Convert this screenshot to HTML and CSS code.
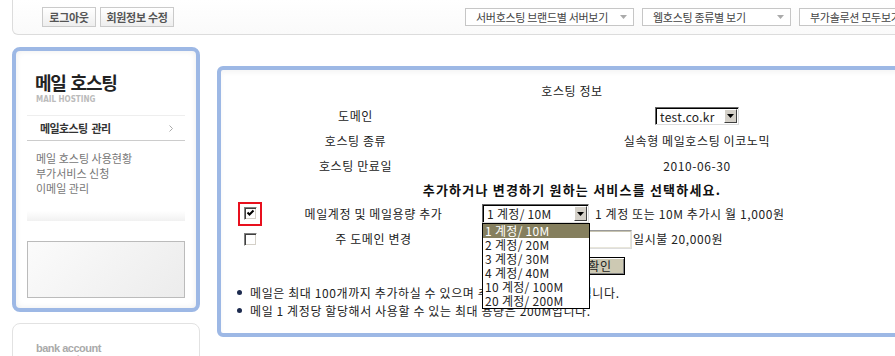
FILE: index.html
```html
<!DOCTYPE html>
<html>
<head>
    <meta charset="utf-8">
    <link rel="stylesheet" href="styles.css">
</head>
<body>
    <!-- Top Bar -->
    <div class="topbar">
        <div class="top-buttons">
            <span class="top-btn btn-logout">로그아웃</span>
            <span class="top-btn btn-member">회원정보 수정</span>
        </div>
        <div class="top-selects">
            <div class="top-select sel-server">서버호스팅 브랜드별 서버보기
                <svg width="7" height="4" viewBox="0 0 7 4"><path d="M0 0h7L3.5 4z" fill="#aaa"/></svg>
            </div>
            <div class="top-select sel-web">웹호스팅 종류별 보기
                <svg width="7" height="4" viewBox="0 0 7 4"><path d="M0 0h7L3.5 4z" fill="#aaa"/></svg>
            </div>
            <div class="top-select sel-addon">부가솔루션 모두보기
                <svg width="7" height="4" viewBox="0 0 7 4"><path d="M0 0h7L3.5 4z" fill="#aaa"/></svg>
            </div>
        </div>
    </div>

    <div class="layout">
        <!-- Left Sidebar -->
        <div class="sidebar">
            <div class="side-box">
                <div class="side-title">메일 호스팅</div>
                <div class="side-sub">MAIL HOSTING</div>
                <div class="side-menu">
                    <span>메일호스팅 관리</span>
                    <svg width="4" height="7" viewBox="0 0 4 7"><path d="M0.5 0.5L3.5 3.5L0.5 6.5" fill="none" stroke="#aaa" stroke-width="1"/></svg>
                </div>
                <ul class="side-links">
                    <li>메일 호스팅 사용현황</li>
                    <li>부가서비스 신청</li>
                    <li>이메일 관리</li>
                </ul>
                <div class="side-band"></div>
                <div class="side-banner"></div>
            </div>
            <div class="bank-box">
                <div class="bank-title">bank account</div>
                <div class="bank-name">국민은행 계좌안내</div>
            </div>
        </div>

        <!-- Main Panel -->
        <div class="panel">
            <div class="info">
                <div class="info-title">호스팅 정보</div>
                <div class="info-label">도메인</div>
                <div class="info-value">
                    <div class="win-select sel-domain">
                        <span class="win-text">test.co.kr</span>
                        <span class="win-arrow"><svg width="7" height="4" viewBox="0 0 7 4"><path d="M0 0h7L3.5 4z" fill="#000"/></svg></span>
                    </div>
                </div>
                <div class="info-label">호스팅 종류</div>
                <div class="info-value">실속형 메일호스팅 이코노믹</div>
                <div class="info-label">호스팅 만료일</div>
                <div class="info-value">2010-06-30</div>
            </div>
            <div class="info-heading">추가하거나 변경하기 원하는 서비스를 선택하세요.</div>

            <div class="options">
                <div class="opt-check">
                    <span class="check-frame">
                        <span class="win-check"><svg width="9" height="9" viewBox="0 0 9 9"><path d="M1.5 3.5L3.5 5.5L7.5 1.5" fill="none" stroke="#000" stroke-width="2"/></svg></span>
                    </span>
                </div>
                <div class="opt-label">메일계정 및 메일용량 추가</div>
                <div class="opt-control">
                    <div class="win-select sel-account">
                        <span class="win-text">1 계정/ 10M</span>
                        <span class="win-arrow"><svg width="7" height="4" viewBox="0 0 7 4"><path d="M0 0h7L3.5 4z" fill="#000"/></svg></span>
                    </div>
                    <span class="opt-note">1 계정 또는 10M 추가시 월 1,000원</span>
                </div>

                <div class="opt-check">
                    <span class="win-check"></span>
                </div>
                <div class="opt-label">주 도메인 변경</div>
                <div class="opt-control">
                    <span class="win-input"></span>
                    <span class="opt-note note-tight">일시불 20,000원</span>
                </div>

                <div class="opt-control opt-submit">
                    <span class="win-button">확인</span>
                </div>
            </div>

            <ul class="notes">
                <li>메일은 최대 100개까지 추가하실 수 있으며 추가 시 요금이 부과됩니다.</li>
                <li>메일 1 계정당 할당해서 사용할 수 있는 최대 용량은 200M입니다.</li>
            </ul>

            <!-- open dropdown list -->
            <ul class="drop-list">
                <li class="active">1 계정/ 10M</li>
                <li>2 계정/ 20M</li>
                <li>3 계정/ 30M</li>
                <li>4 계정/ 40M</li>
                <li>10 계정/ 100M</li>
                <li>20 계정/ 200M</li>
            </ul>
        </div>
    </div>
</body>
</html>
```

FILE: styles.css
```css
* {
    box-sizing: border-box;
}
html, body {
    margin: 0;
}
body {
    width: 895px;
    height: 356px;
    overflow: hidden;
    background: #fff;
    font-family: "Noto Sans CJK KR", "Noto Sans", sans-serif;
    color: #222;
}

/* Top Bar */
.topbar {
    display: flex;
    align-items: center;
    width: 1000px;
    height: 35px;
    margin-left: 12px;
    padding-left: 29px;
    background: linear-gradient(#fff, #fafafa);
    border: 1px solid #dcdcdc;
    border-top: none;
    border-radius: 0 0 0 6px;
}
.top-buttons {
    display: flex;
    gap: 4px;
}
.top-btn {
    display: flex;
    align-items: center;
    justify-content: center;
    height: 20px;
    border: 1px solid #cacaca;
    background: linear-gradient(#fff, #eee);
    font-size: 11px;
    font-weight: bold;
    color: #555;
    letter-spacing: -0.3px;
}
.btn-logout {
    width: 54px;
}
.btn-member {
    width: 74px;
}
.top-selects {
    display: flex;
    gap: 8px;
    margin-left: 291px;
}
.top-select {
    display: flex;
    align-items: center;
    justify-content: space-between;
    height: 18px;
    padding: 0 6px 0 10px;
    border: 1px solid #c6c6c6;
    background: #fff;
    font-size: 11px;
    color: #444;
    letter-spacing: -0.3px;
    white-space: nowrap;
}
.sel-server {
    width: 169px;
}
.sel-web {
    width: 149px;
}
.sel-addon {
    width: 150px;
}

/* Layout */
.layout {
    display: flex;
    align-items: flex-start;
}

/* Left Sidebar */
.sidebar {
    width: 188px;
    margin-left: 12px;
    margin-top: 12px;
    flex-shrink: 0;
}
.side-box {
    padding: 0 11px 10px;
    border: 4px solid #9db8e5;
    border-radius: 8px;
    background: #fff;
    box-shadow: inset 0 0 6px rgba(0,0,0,0.08);
}
.side-title {
    margin: 20px 0 0 8px;
    font-size: 18px;
    line-height: 22px;
    font-weight: bold;
    letter-spacing: -1.2px;
    word-spacing: 2px;
    color: #222;
}
.side-sub {
    margin: 2px 0 0 9px;
    font-family: "DejaVu Sans Condensed", "Liberation Sans", sans-serif;
    font-size: 8px;
    line-height: 10px;
    font-weight: bold;
    color: #bbb;
}
.side-menu {
    display: flex;
    align-items: center;
    justify-content: space-between;
    height: 26px;
    margin-top: 10px;
    padding: 0 12px 0 13px;
    border-top: 1px solid #eee;
    border-bottom: 1px solid #ccc;
    font-size: 11px;
    font-weight: bold;
    letter-spacing: -0.6px;
    word-spacing: 2px;
    color: #333;
}
.side-links {
    list-style: none;
    margin: 10px 0 0;
    padding-left: 9px;
    font-size: 11px;
    line-height: 15px;
    letter-spacing: 0;
    color: #777;
}
.side-band {
    height: 10px;
    margin-top: 15px;
    background: linear-gradient(#fff, #f1f1f1);
}
.side-banner {
    height: 57px;
    margin-top: 20px;
    border: 1px solid #bbb;
    background: linear-gradient(135deg, #fbfbfb, #ececec);
}
.bank-box {
    height: 60px;
    margin-top: 11px;
    padding: 18px 0 0 23px;
    border: 1px solid #e2e2e2;
    border-radius: 8px;
}
.bank-title {
    font-family: "Liberation Sans", sans-serif;
    font-size: 11px;
    line-height: 13px;
    font-weight: bold;
    letter-spacing: -0.5px;
    color: #aaa;
}
.bank-name {
    font-size: 12px;
    line-height: 14px;
    font-weight: bold;
    color: #333;
}

/* Main Panel */
.panel {
    position: relative;
    flex-shrink: 0;
    width: 720px;
    height: 271px;
    margin-top: 31px;
    margin-left: 17px;
    padding-top: 8px;
    border: 4px solid #9db8e5;
    border-radius: 6px;
    background: #fff;
    box-shadow: inset 0 3px 4px rgba(0,0,0,0.04);
    font-size: 12px;
    letter-spacing: 0.6px;
    color: #222;
}
.info {
    display: grid;
    grid-template-columns: 269px 414px 19px;
    grid-auto-rows: 25px;
    align-items: center;
    text-align: center;
    line-height: 16px;
}
.info-title {
    grid-column: 1 / -1;
}
.info-label {
    grid-column: 1;
}
.info-value {
    grid-column: 2;
    display: flex;
    justify-content: center;
}
.info-heading {
    width: 702px;
    height: 23px;
    line-height: 23px;
    text-align: center;
    font-size: 13px;
    font-weight: bold;
    letter-spacing: 1.2px;
    color: #111;
}

/* Windows classic controls */
.win-select {
    display: flex;
    align-items: stretch;
    height: 19px;
    border: 1px solid;
    border-color: #666 #ddd #ddd #666;
    box-shadow: inset 1px 1px 0 #000;
    background: #fff;
    padding: 1px 1px 1px 2px;
    letter-spacing: 0.3px;
}
.win-text {
    flex: 1;
    padding-left: 2px;
    line-height: 15px;
    font-size: 12px;
    white-space: nowrap;
}
.win-arrow {
    display: flex;
    align-items: center;
    justify-content: center;
    width: 13px;
    background: #d4d0c8;
    border: 1px solid;
    border-color: #fff #404040 #404040 #fff;
}
.sel-domain {
    width: 84px;
    height: 18px;
    text-align: left;
}
.sel-account {
    width: 107px;
}
.win-check {
    display: flex;
    align-items: center;
    justify-content: center;
    width: 13px;
    height: 13px;
    border: 1px solid;
    border-color: #808080 #fff #fff #808080;
    box-shadow: inset 1px 1px 0 #404040, inset -1px -1px 0 #d4d0c8;
    background: #fff;
}
.win-input {
    display: block;
    width: 150px;
    height: 19px;
    border: 1px solid;
    border-color: #999 #ddd #ddd #999;
    box-shadow: inset 1px 1px 0 #c8c4b0, inset -1px -1px 0 #e8e6da;
    background: #fff;
}
.win-button {
    display: flex;
    align-items: center;
    justify-content: center;
    width: 50px;
    height: 18px;
    margin-left: 93px;
    border: 1px solid #000;
    box-shadow: inset 1px 1px 0 #fff, inset -1px -1px 0 #808080;
    background: #cdc9b3;
    font-size: 12px;
}

/* Options */
.options {
    display: grid;
    grid-template-columns: 50px 197px auto;
    grid-template-rows: 25px 26px 27px;
    align-items: center;
    padding-left: 4px;
    line-height: 16px;
}
.opt-check {
    grid-column: 1;
    display: flex;
    justify-content: center;
}
.check-frame {
    display: flex;
    align-items: center;
    justify-content: center;
    width: 24px;
    height: 24px;
    border: 2px solid #e8101e;
}
.opt-label {
    grid-column: 2;
    text-align: center;
}
.opt-control {
    grid-column: 3;
    display: flex;
    align-items: center;
    gap: 6px;
    padding-left: 10px;
}
.note-tight {
    margin-left: -5px;
}
.opt-submit {
    grid-row: 3;
}

/* Notes */
.notes {
    list-style: none;
    margin: 4px 0 0;
    padding: 0 0 0 16px;
}
.notes li {
    display: flex;
    align-items: center;
    gap: 8px;
    height: 18px;
    white-space: nowrap;
}
.notes li::before {
    content: '';
    width: 5px;
    height: 5px;
    border-radius: 50%;
    background: #1d2b4f;
}

/* Dropdown list */
.drop-list {
    position: absolute;
    left: 261px;
    top: 153px;
    z-index: 2;
    width: 108px;
    margin: 0;
    padding: 0;
    list-style: none;
    border: 1px solid #000;
    background: #fff;
    letter-spacing: 0.3px;
}
.drop-list li {
    height: 14px;
    line-height: 14px;
    padding-left: 2px;
    font-size: 12px;
    white-space: nowrap;
}
.drop-list .active {
    background: #857f5e;
    color: #fff;
}
```
